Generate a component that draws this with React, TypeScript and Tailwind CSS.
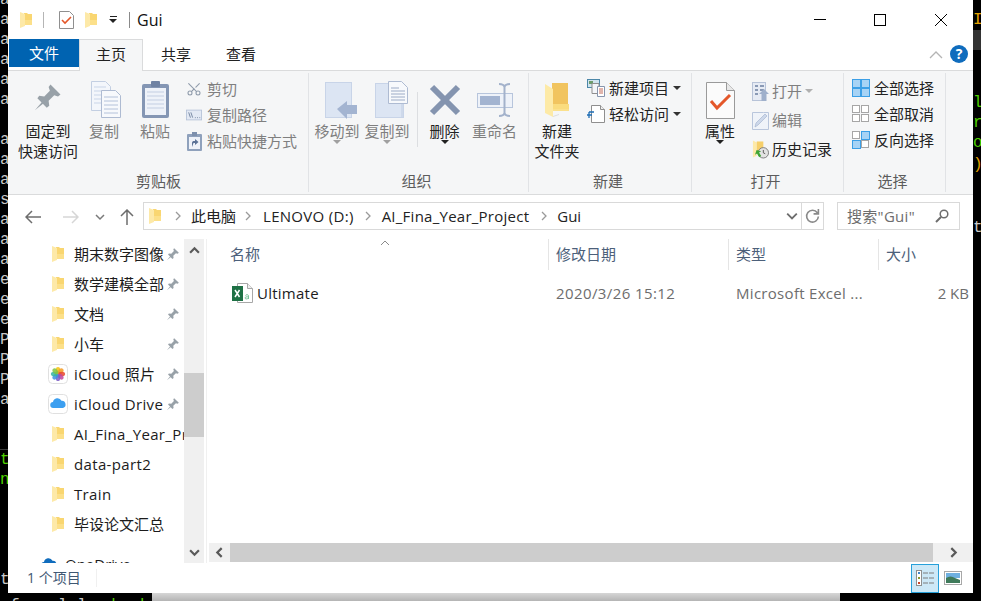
import type { ReactNode } from 'react';
import { Scissors } from 'lucide-react';

const leftRows: [string, string][] = [
  ['a', 'text-[#c8c8c8]'], ['a', 'text-[#c8c8c8]'], ['a', 'text-[#c8c8c8]'], ['a', 'text-[#c8c8c8]'], ['a', 'text-[#c8c8c8]'], ['a', 'text-[#c8c8c8]'],
  ['', ''], ['a', 'text-[#c8c8c8]'], ['a', 'text-[#c8c8c8]'], ['a', 'text-[#c8c8c8]'], ['s', 'text-[#c8c8c8]'], ['a', 'text-[#c8c8c8]'],
  ['a', 'text-[#c8c8c8]'], ['a', 'text-[#c8c8c8]'], ['e', 'text-[#c8c8c8]'], ['e', 'text-[#c8c8c8]'], ['e', 'text-[#c8c8c8]'], ['P', 'text-[#c8c8c8]'],
  ['P', 'text-[#c8c8c8]'], ['P', 'text-[#c8c8c8]'], ['a', 'text-[#c8c8c8]'], ['', ''], ['', 'border-b border-[#3a3a3a]'], ['t', 'text-[#4fd000]'],
  ['n', 'text-[#4fd000]'], ['', ''], ['', ''], ['', ''], ['', ''], ['t', 'text-[#c8c8c8]'],
];

const rightRows: [string, string][] = [
  ['', ''], ['I', 'text-[#e0a000]'], ['', 'bg-[#333333]'], ['', ''], ['', ''], ['l', 'text-[#4fd000] mt-[3px]'],
  ['r', 'text-[#4fd000]'], ['o', 'text-[#4fd000]'], [')', 'text-[#e0a000] mt-[2px]'], ['', ''], ['', ''], ['t', 'text-[#c8c8c8] mt-[3px]'],
];

function Folder({ w = 12, h = 16 }: { w?: number; h?: number }) {
  return (
    <svg width={w} height={h} viewBox="0 0 12 16" className="shrink-0">
      <path d="M4 1h3l1 1h4v11H4z" fill="#f9d671" />
      <path d="M0 0l5 2v12l-5 2z" fill="#fde9a8" />
      <path d="M5 8h7v5H5z" fill="#fce08a" />
    </svg>
  );
}

function BigFolder() {
  return (
    <svg width="26" height="36" viewBox="0 0 26 36">
      <path d="M8 1h16v27H8z" fill="#f1c45f" />
      <path d="M7 22h18v7H7z" fill="#fadc7e" />
      <path d="M1 2l8 5v28l-8-4z" fill="#fdeaa7" />
      <path d="M9 27h16v2H9z" fill="#fbe18d" />
      <path d="M9 34l6-2v1l-6 2z" fill="#ddd" />
    </svg>
  );
}

function Pin({ size = 14 }: { size?: number }) {
  return (
    <svg width={size} height={size} viewBox="0 0 24 24" className="shrink-0">
      <path d="M14 2l8 8-2 1.500-3-1-4.500 4.500.5 4-2 1.500-7.500-7.500 1.500-2 4 .5L13.500 7l-1-3z" fill="#98a1a8" />
      <path d="M8 15l-6.500 7.500L9 16.500z" fill="#98a1a8" />
    </svg>
  );
}

function CopyIcon() {
  return (
    <svg width="30" height="37" viewBox="0 0 30 37" className="ml-[3px] -mt-[2px]">
      <path d="M.5.500h14l5 5v24H.5z" fill="#f3f6fb" stroke="#c3cfe2" />
      <path d="M3 6h12M3 10h14M3 14h14M3 18h14M3 22h14" stroke="#c9d5e8" />
      <path d="M10.500 9.500h14l5 5v22h-19z" fill="#f7f9fc" stroke="#aebbd2" />
      <path d="M13 16h14M13 20h14M13 24h14M13 28h14M13 32h14" stroke="#b4c2da" />
    </svg>
  );
}

function PasteIcon() {
  return (
    <svg width="27" height="37" viewBox="0 0 27 37" className="-mt-[2px]">
      <rect x="0" y="3" width="27" height="34" rx="2" fill="#8496b4" />
      <rect x="3" y="7" width="21" height="27" fill="#eef2f9" />
      <path d="M5 11h17M5 15h17M5 19h17M5 23h17M5 27h17" stroke="#c3cee2" />
      <rect x="9" y="0" width="9" height="6" rx="1" fill="#6f82a3" />
    </svg>
  );
}

function CopyPathIcon() {
  return (
    <svg width="18" height="12" viewBox="0 0 18 12">
      <rect x=".5" y=".5" width="17" height="11" fill="#e3e9f4" stroke="#b7c3d8" />
      <path d="M3 3l2 6M5.500 3l2 6" stroke="#6d7f9c" />
      <path d="M10 9h1M12.500 9h1M15 9h1" stroke="#6d7f9c" />
    </svg>
  );
}

function ShortcutIcon() {
  return (
    <svg width="15" height="19" viewBox="0 0 15 19">
      <rect x="0" y="2" width="15" height="17" rx="1" fill="#8fa1bc" />
      <rect x="2" y="5" width="11" height="12" fill="#eef2f9" />
      <rect x="5" y="0" width="5" height="4" fill="#7d90ad" />
      <path d="M5 15v-4c0-1.500 1-2 2-2h1V7l3.500 3L8 13v-2H7c-.8 0-1 .8-1 1.500z" fill="#5b7297" />
    </svg>
  );
}

function MoveToIcon() {
  return (
    <svg width="33" height="37" viewBox="0 0 33 37" className="ml-[8px]">
      <rect x=".5" y=".5" width="26" height="35" fill="#dce5f3" stroke="#c8d4e8" />
      <path d="M12 27l10-8v4h10v9H22v5z" fill="#a3b4d1" />
    </svg>
  );
}

function CopyToIcon() {
  return (
    <svg width="33" height="38" viewBox="0 0 33 38" className="ml-[8px]">
      <rect x=".5" y="2.500" width="28" height="34" fill="#dce5f3" stroke="#c8d4e8" />
      <path d="M13.500.5h13l6 6v16h-19z" fill="#f7f9fc" stroke="#aebbd2" />
      <path d="M16 7h8M16 10h14M16 13h14M16 16h14M16 19h14" stroke="#9cabc6" />
      <path d="M27 23v13" stroke="#c0cde2" />
    </svg>
  );
}

function DeleteIcon() {
  return (
    <svg width="32" height="32" viewBox="0 0 32 32">
      <path d="M3 3l26 26M29 3L3 29" stroke="#8494af" strokeWidth="6" />
    </svg>
  );
}

function RenameIcon() {
  return (
    <svg width="36" height="34" viewBox="0 0 36 34">
      <rect x=".5" y="10.500" width="35" height="14" fill="#eef2f9" stroke="#b7c5dc" />
      <rect x="3" y="13" width="20" height="9" fill="#a3b4d1" />
      <path d="M22 1c3 0 5 1 5.500 3C28 2 30 1 33 1M27.500 4v26M22 33c3 0 5-1 5.500-3 .5 2 2.500 3 5.500 3" fill="none" stroke="#a3b2cb" strokeWidth="2" />
    </svg>
  );
}

function NewItemIcon() {
  return (
    <svg width="18" height="18" viewBox="0 0 18 18">
      <rect x=".5" y=".5" width="12" height="8" fill="#cfe3ee" stroke="#4c87a8" />
      <rect x="2" y="2" width="4" height="3" fill="#6d9c6c" />
      <path d="M5 4.500h7v10H5z" fill="#f4f6fa" stroke="#8f8f8f" />
      <path d="M10.500 7.500h7v10h-7z" fill="#fff" stroke="#8795ad" />
      <path d="M12 10h4M12 12h4M12 14h4" stroke="#c26a5a" />
    </svg>
  );
}

function EasyAccessIcon() {
  return (
    <svg width="18" height="18" viewBox="0 0 18 18">
      <path d="M4.500.5h9l4 4v13h-13z" fill="#fff" stroke="#8f8f8f" />
      <path d="M13.500.5v4h4" fill="#eee" stroke="#8f8f8f" />
      <path d="M2 7h5M0 10h5M2 7v6" stroke="#1e6db5" strokeWidth="1.300" fill="none" />
    </svg>
  );
}

function PropertiesIcon() {
  return (
    <svg width="29" height="37" viewBox="0 0 29 37">
      <path d="M.5.500h20l8 8v28H.5z" fill="#fbfbfb" stroke="#9a9a9a" />
      <path d="M20.500.5v8h8" fill="#e8e8e8" stroke="#9a9a9a" />
      <path d="M5 19l6 7 13-13" fill="none" stroke="#e4572a" strokeWidth="3" />
    </svg>
  );
}

function OpenIcon() {
  return (
    <svg width="17" height="19" viewBox="0 0 17 19">
      <rect x=".5" y=".5" width="13" height="18" fill="#e6ebf4" stroke="#b7c3d8" />
      <path d="M3 4h3M8 4h4M3 8h3M8 8h4M3 12h3" stroke="#8a9ab5" strokeWidth="2" />
      <path d="M12 7l5 5h-2.500v7h-5v-7H7z" fill="#9fb0cb" />
    </svg>
  );
}

function EditIcon() {
  return (
    <svg width="17" height="18" viewBox="0 0 17 18">
      <path d="M.5.500h11l5 0v17H.5z" fill="#eff3f9" stroke="#b9c6dc" />
      <path d="M3 15l1-4 9-9 2 2-9 9z" fill="#cdd8ea" stroke="#a7b7d1" strokeWidth=".7" />
    </svg>
  );
}

function HistoryIcon() {
  return (
    <svg width="18" height="19" viewBox="0 0 18 19">
      <path d="M1 0l4 2v14l-4 2z" fill="#fde9a8" />
      <path d="M5 1h7v13H5z" fill="#f6cf6a" />
      <circle cx="12" cy="13" r="5.500" fill="#e3e3e3" stroke="#7a7a7a" />
      <path d="M12 10v3l2 1" stroke="#555" fill="none" />
      <path d="M7 10l-4 3.500h2.500V18H8v-4.500h2.500z" fill="#3fa535" transform="rotate(-30 6 14)" />
    </svg>
  );
}

function SelectGrid({ on }: { on: boolean[] }) {
  const cells = [[1, 1], [10, 1], [1, 10], [10, 10]];
  return (
    <svg width="18" height="18" viewBox="0 0 18 18">
      {cells.map(([x, y], i) =>
        on[i] ? (
          <rect key={i} x={x - 0.5} y={y - 0.5} width="8" height="8" fill="#a7d3f5" stroke="#3c9fe6" />
        ) : (
          <rect key={i} x={x - 0.5} y={y - 0.5} width="7" height="7" fill="#fff" stroke="#a6a6a6" />
        )
      )}
    </svg>
  );
}

function ExcelIcon() {
  return (
    <svg width="21" height="20" viewBox="0 0 21 20">
      <path d="M5.500.5h10l5 5v14h-15z" fill="#fff" stroke="#a8a8a8" />
      <path d="M15.500.5v5h5" fill="#eee" stroke="#a8a8a8" />
      <rect x="0" y="3" width="11" height="15" fill="#1e7145" />
      <path d="M3 7l4.500 7M7.500 7L3 14" stroke="#fff" strokeWidth="1.500" />
      <path d="M16.500 16v-3.500c0-1-3-1-3 0M16.500 14c-2-.5-3.500 0-3.500 1s2 1.500 3.500 0" fill="none" stroke="#7cc29b" />
    </svg>
  );
}

function PhotosIcon() {
  const petals = ['#f4c20d', '#f59a23', '#e8452c', '#c2469b', '#7b5bc4', '#3d8fe0', '#32b4a2', '#7fc241'];
  return (
    <svg width="20" height="20" viewBox="0 0 20 20" className="shrink-0">
      <rect x=".5" y=".5" width="19" height="19" rx="4" fill="#fff" stroke="#e0e0e0" />
      {petals.map((c, i) => (
        <ellipse key={i} cx="10" cy="6.300" rx="2.300" ry="3.400" fill={c} opacity=".85" transform={`rotate(${i * 45} 10 10)`} />
      ))}
    </svg>
  );
}

function CloudIcon({ w = 20, h = 20, color = '#3c9ff0', framed = true }: { w?: number; h?: number; color?: string; framed?: boolean }) {
  return (
    <svg width={w} height={h} viewBox="0 0 20 20" className="shrink-0">
      {framed && <rect x=".5" y=".5" width="19" height="19" rx="4" fill="#fff" stroke="#e0e0e0" />}
      <path d="M5.500 14a3 3 0 0 1-.5-6 4.500 4.500 0 0 1 8.500-1.200A3.700 3.700 0 0 1 15 14z" fill={color} />
    </svg>
  );
}

function DetailsViewIcon() {
  return (
    <svg width="18" height="16" viewBox="0 0 18 16">
      <rect x=".5" y=".5" width="5" height="15" fill="#fff" stroke="#8f8f8f" />
      <rect x="2" y="2" width="2" height="2" fill="#3f86c8" />
      <rect x="2" y="7" width="2" height="2" fill="#8b9a2c" />
      <rect x="2" y="12" width="2" height="2" fill="#c8452c" />
      <path d="M7 3h11M7 8h11M7 13h11" stroke="#7d7d7d" strokeDasharray="5 1" />
    </svg>
  );
}

function ThumbViewIcon() {
  return (
    <svg width="18" height="14" viewBox="0 0 18 14">
      <rect x=".5" y=".5" width="17" height="13" fill="#fff" stroke="#a8a8a8" />
      <rect x="2" y="2" width="14" height="5" fill="#6fb0e0" />
      <path d="M2 7c3-2 6-2 9 0l5 2v3H2z" fill="#3f7a5a" />
    </svg>
  );
}

function Chevron({ dir, color = '#5a5a5a', size = 10, stroke = 2 }: { dir: 'up' | 'down' | 'left' | 'right'; color?: string; size?: number; stroke?: number }) {
  const d = { up: 'M1 7l4-4 4 4', down: 'M1 3l4 4 4-4', left: 'M7 1L3 5l4 4', right: 'M3 1l4 4-4 4' }[dir];
  return (
    <svg width={size} height={size} viewBox="0 0 10 10" className="shrink-0">
      <path d={d} fill="none" stroke={color} strokeWidth={stroke} />
    </svg>
  );
}

function Caret({ color = '#333' }: { color?: string }) {
  return (
    <svg width="8" height="5" viewBox="0 0 8 5" className="shrink-0">
      <path d="M0 0h8L4 4z" fill={color} />
    </svg>
  );
}

function BigButton({ icon, lines, width, caret, dim }: { icon: ReactNode; lines: string[]; width: string; caret?: string; dim?: boolean }) {
  return (
    <div className={`${width} shrink-0 flex flex-col items-center pt-[6px]`}>
      <div className="h-[42px] flex items-center justify-center">{icon}</div>
      {lines.map((line) => (
        <div key={line} className={`leading-[20px] whitespace-nowrap ${dim ? 'text-[#7f7f7f]' : 'text-[#222222]'}`}>
          {line}
        </div>
      ))}
      {caret && (
        <div className="mt-[-1px]">
          <Caret color={caret} />
        </div>
      )}
    </div>
  );
}

function SmallButton({ icon, label, dim, iconWidth = 'w-[16px]', gap = 'gap-[5px]', children, rowHeight = 'h-[26px]' }: { icon: ReactNode; label: string; dim?: boolean; iconWidth?: string; gap?: string; children?: ReactNode; rowHeight?: string }) {
  return (
    <div className={`${rowHeight} flex items-center ${gap} whitespace-nowrap ${dim ? 'text-[#7f7f7f]' : 'text-[#222222]'}`}>
      <div className={`${iconWidth} flex justify-center`}>{icon}</div>
      <span>{label}</span>
      {children}
    </div>
  );
}

function Group({ width, label, labelClass = '', children }: { width: string; label: string; labelClass?: string; children: ReactNode }) {
  return (
    <div className={`${width} shrink-0 my-[2px] border-r border-[#e1e3e6] flex flex-col`}>
      <div className="h-[98px] flex">{children}</div>
      <div className={`h-[22px] leading-[22px] text-center text-[#5c5c5c] ${labelClass}`}>{label}</div>
    </div>
  );
}

function Strip({ rows }: { rows: [string, string][] }) {
  return (
    <div className="w-[8px] h-[601px] shrink-0 overflow-hidden bg-black [font-family:'Liberation_Mono',monospace] text-[16px] leading-[20px]">
      <div className="-mt-[10px]">
        {rows.map(([ch, cls], i) => (
          <div key={i} className={`h-[20px] ${cls}`}>
            {ch}
          </div>
        ))}
      </div>
    </div>
  );
}

const navItems: { label: string; icon: ReactNode; pin?: boolean; latin?: boolean }[] = [
  { label: '期末数字图像', icon: <Folder />, pin: true },
  { label: '数学建模全部', icon: <Folder />, pin: true },
  { label: '文档', icon: <Folder />, pin: true },
  { label: '小车', icon: <Folder />, pin: true },
  { label: 'iCloud 照片', icon: <PhotosIcon />, pin: true, latin: true },
  { label: 'iCloud Drive', icon: <CloudIcon />, pin: true, latin: true },
  { label: 'AI_Fina_Year_Project', icon: <Folder />, latin: true },
  { label: 'data-part2', icon: <Folder />, latin: true },
  { label: 'Train', icon: <Folder />, latin: true },
  { label: '毕设论文汇总', icon: <Folder /> },
];

const crumbs = [
  { label: '此电脑', sep: 'ml-[12px]', gap: 'ml-[8px]' },
  { label: 'LENOVO (D:)', sep: 'ml-[7px]', gap: 'ml-[10px] tracking-[0.3px]' },
  { label: 'AI_Fina_Year_Project', sep: 'ml-[9px]', gap: 'ml-[9px] tracking-[0.25px]' },
  { label: 'Gui', sep: 'ml-[10px]', gap: 'ml-[8px]' },
];

export default function App() {
  return (
    <div className="w-[981px] h-[601px] flex overflow-hidden bg-black text-[15px] [font-family:'Open_Sans','Noto_Sans_CJK_SC',sans-serif]">
      <Strip rows={leftRows} />

      <div className="w-[965px] shrink-0 flex flex-col">
        <div className="h-[593px] shrink-0 bg-white flex flex-col">
          {/* Title bar */}
          <div className="h-[39px] shrink-0 flex items-center">
            <div className="ml-[12px]"><Folder /></div>
            <div className="ml-[11px] w-px h-[16px] bg-[#b5b5b5]" />
            <div className="ml-[15px]">
              <svg width="15" height="18" viewBox="0 0 15 18">
                <path d="M.5.500h10l4 4v13H.5z" fill="#fff" stroke="#8f8f8f" />
                <path d="M3 9l3 3 6-6" fill="none" stroke="#e4572a" strokeWidth="1.600" />
              </svg>
            </div>
            <div className="ml-[11px]"><Folder /></div>
            <div className="ml-[12px] flex flex-col items-center gap-[2px]">
              <div className="w-[7px] h-px bg-[#222]" />
              <Caret color="#222" />
            </div>
            <div className="ml-[12px] w-px h-[16px] bg-[#8a8a8a]" />
            <div className="ml-[7px] text-[16px] text-[#111]">Gui</div>
            <div className="ml-auto flex items-center">
              <div className="w-[12px] h-px bg-black" />
              <div className="ml-[48px] w-[12px] h-[12px] border border-black" />
              <svg className="ml-[49px] mr-[26px]" width="12" height="12" viewBox="0 0 12 12">
                <path d="M0 0l12 12M12 0L0 12" stroke="#000" strokeWidth="1" />
              </svg>
            </div>
          </div>

          {/* Tabs */}
          <div className="h-[32px] shrink-0 flex items-start border-b border-[#dadbdc] pl-px">
            <div className="w-[70px] h-[28px] bg-[#0063b1] text-white text-center leading-[28px]">文件</div>
            <div className="w-[64px] h-[32px] bg-[#f5f6f7] border-x border-t border-[#dadbdc] text-center leading-[28px] text-[#222]">主页</div>
            <div className="ml-[18px] leading-[30px] text-[#222]">共享</div>
            <div className="ml-[35px] leading-[30px] text-[#222]">查看</div>
            <div className="ml-auto mr-[5px] mt-[6px] flex items-center gap-[7px]">
              <svg width="14" height="9" viewBox="0 0 14 9">
                <path d="M1 8l6-6 6 6" fill="none" stroke="#b4b4b4" strokeWidth="1.300" />
              </svg>
              <div className="w-[18px] h-[18px] rounded-full bg-[#0f6cbd] text-white text-[14px] font-bold leading-[18px] text-center">?</div>
            </div>
          </div>

          {/* Ribbon */}
          <div className="h-[124px] shrink-0 flex bg-[#f5f6f7] border-b border-[#dadbdc] pl-px">
            <Group width="w-[300px]" label="剪贴板">
              <div className="ml-[9px] flex">
                <BigButton width="w-[60px]" lines={['固定到', '快速访问']} icon={<div className="mt-[-6px]"><Pin size={30} /></div>} />
                <BigButton width="w-[52px]" dim lines={['复制']} icon={<CopyIcon />} />
                <BigButton width="w-[50px]" dim lines={['粘贴']} icon={<PasteIcon />} />
              </div>
              <div className="ml-[6px] pt-[3px]">
                <SmallButton dim label="剪切" icon={<Scissors size={16} strokeWidth={1.6} color="#8f9bab" className="-rotate-90" />} />
                <SmallButton dim label="复制路径" icon={<CopyPathIcon />} />
                <SmallButton dim label="粘贴快捷方式" icon={<ShortcutIcon />} />
              </div>
            </Group>

            <Group width="w-[220px]" label="组织" labelClass="pr-[4px]">
              <div className="ml-[3px] flex">
                <BigButton width="w-[50px]" dim caret="#a0a0a0" lines={['移动到']} icon={<MoveToIcon />} />
                <BigButton width="w-[50px]" dim caret="#a0a0a0" lines={['复制到']} icon={<CopyToIcon />} />
                <div className="ml-[5px] mt-[19px] w-px h-[55px] bg-[#dcdee1]" />
                <BigButton width="w-[53px]" caret="#222" lines={['删除']} icon={<DeleteIcon />} />
                <BigButton width="w-[47px]" dim lines={['重命名']} icon={<RenameIcon />} />
              </div>
            </Group>

            <Group width="w-[163px]" label="新建" labelClass="pr-[4px]">
              <BigButton width="w-[56px]" lines={['新建', '文件夹']} icon={<BigFolder />} />
              <div className="ml-[2px] pt-[2px]">
                <SmallButton label="新建项目" iconWidth="w-[18px]" gap="gap-[4px]" icon={<NewItemIcon />}>
                  <Caret color="#333" />
                </SmallButton>
                <SmallButton label="轻松访问" iconWidth="w-[18px]" gap="gap-[4px]" icon={<EasyAccessIcon />}>
                  <Caret color="#333" />
                </SmallButton>
              </div>
            </Group>

            <Group width="w-[152px]" label="打开" labelClass="pr-[4px]">
              <div className="ml-[3px]">
                <BigButton width="w-[50px]" caret="#222" lines={['属性']} icon={<PropertiesIcon />} />
              </div>
              <div className="ml-[7px] pt-[4px]">
                <SmallButton dim rowHeight="h-[29px]" label="打开" iconWidth="w-[17px]" gap="gap-[3px]" icon={<OpenIcon />}>
                  <Caret color="#b0b0b0" />
                </SmallButton>
                <SmallButton dim rowHeight="h-[29px]" label="编辑" iconWidth="w-[17px]" gap="gap-[3px]" icon={<EditIcon />} />
                <SmallButton rowHeight="h-[29px]" label="历史记录" iconWidth="w-[17px]" gap="gap-[3px]" icon={<HistoryIcon />} />
              </div>
            </Group>

            <Group width="w-[102px]" label="选择" labelClass="pr-[4px]">
              <div className="ml-[8px] pt-[2px]">
                <SmallButton label="全部选择" iconWidth="w-[18px]" gap="gap-[4px]" icon={<SelectGrid on={[true, true, true, true]} />} />
                <SmallButton label="全部取消" iconWidth="w-[18px]" gap="gap-[4px]" icon={<SelectGrid on={[false, false, false, false]} />} />
                <SmallButton label="反向选择" iconWidth="w-[18px]" gap="gap-[4px]" icon={<SelectGrid on={[false, true, true, false]} />} />
              </div>
            </Group>
          </div>

          {/* Address bar */}
          <div className="h-[44px] shrink-0 flex items-start">
            <div className="h-[44px] flex items-center pl-[17px]">
              <svg width="16" height="14" viewBox="0 0 16 14">
                <path d="M7 1L1 7l6 6M1 7h15" fill="none" stroke="#6d6d6d" strokeWidth="1.500" />
              </svg>
              <svg className="ml-[22px]" width="16" height="14" viewBox="0 0 16 14">
                <path d="M9 1l6 6-6 6M15 7H0" fill="none" stroke="#d6d6d6" strokeWidth="1.500" />
              </svg>
              <div className="ml-[16px]"><Chevron dir="down" color="#7a7a7a" size={10} stroke={1.500} /></div>
              <svg className="ml-[15px]" width="14" height="16" viewBox="0 0 14 16">
                <path d="M1 7l6-6 6 6M7 1v15" fill="none" stroke="#6d6d6d" strokeWidth="1.500" />
              </svg>
            </div>
            <div className="ml-[9px] mt-[7px] w-[681px] h-[28px] border border-[#d9d9d9] flex items-center text-[#222] whitespace-nowrap">
              <div className="ml-[5px]"><Folder /></div>
              {crumbs.map((c) => (
                <div key={c.label} className="flex items-center">
                  <div className={c.sep}><Chevron dir="right" color="#9a9a9a" size={10} stroke={1.300} /></div>
                  <span className={c.gap}>{c.label}</span>
                </div>
              ))}
              <div className="ml-auto flex items-center h-full">
                <Chevron dir="down" color="#6d6d6d" size={12} stroke={1.500} />
                <div className="ml-[3px] w-px h-full bg-[#d9d9d9]" />
                <svg className="mx-[3px]" width="15" height="15" viewBox="0 0 14 14">
                  <path d="M11.500 3.500a5.500 5.500 0 1 0 1 3.500M12.500 0v4.500H8" fill="none" stroke="#8a8a8a" strokeWidth="1.500" />
                </svg>
              </div>
            </div>
            <div className="ml-[13px] mt-[7px] w-[123px] h-[28px] border border-[#d9d9d9] flex items-center pl-[9px] text-[#6d6d6d] whitespace-nowrap">
              <span className="tracking-[0.3px]">搜索"Gui"</span>
              <svg className="ml-auto mr-[10px]" width="14" height="14" viewBox="0 0 14 14">
                <circle cx="9" cy="5" r="3.800" fill="none" stroke="#6d6d6d" strokeWidth="1.500" />
                <path d="M6 8l-5 5" stroke="#6d6d6d" strokeWidth="2" />
              </svg>
            </div>
          </div>

          {/* Body */}
          <div className="h-[324px] shrink-0 flex">
            <div className="w-[176px] shrink-0 overflow-hidden text-[#1c1c1c]">
              {navItems.map((item) => (
                <div key={item.label} className="h-[30px] flex items-center relative whitespace-nowrap">
                  <div className="w-[20px] ml-[40px] flex justify-center shrink-0">{item.icon}</div>
                  <span className={item.latin ? 'ml-[6px] tracking-[0.35px]' : 'ml-[6px]'}>{item.label}</span>
                  {item.pin && (
                    <div className="absolute left-[157px] top-[8px] bg-white pl-[1px]"><Pin size={14} /></div>
                  )}
                </div>
              ))}
              <div className="h-[40px] flex items-center whitespace-nowrap mt-[5px]">
                <div className="ml-[31px]"><CloudIcon framed={false} color="#0f6cbd" w={20} h={20} /></div>
                <span className="ml-[6px]">OneDrive</span>
              </div>
            </div>

            <div className="w-[20px] shrink-0 bg-[#f0f0f0] flex flex-col">
              <div className="h-[22px] flex items-center justify-center"><Chevron dir="up" size={11} /></div>
              <div className="mt-[112px] h-[64px] bg-[#cdcdcd]" />
              <div className="mt-auto h-[22px] flex items-center justify-center"><Chevron dir="down" size={11} /></div>
            </div>

            <div className="w-[2px] shrink-0" />
            <div className="w-px shrink-0 bg-[#f0f0f0]" />

            <div className="flex-1 flex flex-col relative pl-[2px]">
              <div className="absolute left-[173px] top-[1px]">
                <svg width="10" height="6" viewBox="0 0 10 6">
                  <path d="M1 5l4-4 4 4" fill="none" stroke="#8a8a8a" />
                </svg>
              </div>
              <div className="h-[31px] flex items-center text-[#4c607a] whitespace-nowrap">
                <div className="w-[340px] h-full flex items-center pl-[21px] border-r border-[#e5e5e5]">名称</div>
                <div className="w-[180px] h-full flex items-center pl-[7px] border-r border-[#e5e5e5]">修改日期</div>
                <div className="w-[150px] h-full flex items-center pl-[7px] border-r border-[#e5e5e5]">类型</div>
                <div className="pl-[7px]">大小</div>
              </div>
              <div className="mt-[8px] h-[30px] flex items-center whitespace-nowrap">
                <div className="w-[339px] flex items-center pl-[23px] gap-[4px] text-[#1c1c1c]">
                  <ExcelIcon />
                  <span className="tracking-[0.25px]">Ultimate</span>
                </div>
                <div className="w-[180px] pl-[8px] text-[#6d6d6d] tracking-[0.4px]">2020/3/26 15:12</div>
                <div className="w-[150px] pl-[8px] text-[#6d6d6d] tracking-[0.3px]">Microsoft Excel ...</div>
                <div className="w-[91px] text-right text-[#6d6d6d]">2 KB</div>
              </div>
              <div className="mt-auto mb-px h-[19px] bg-[#f0f0f0] flex items-center">
                <div className="w-[21px] flex justify-center"><Chevron dir="left" size={11} /></div>
                <div className="w-[703px] h-full bg-[#cdcdcd]" />
                <div className="flex-1 flex justify-center"><Chevron dir="right" size={11} /></div>
              </div>
            </div>
          </div>

          {/* Status bar */}
          <div className="h-[30px] shrink-0 flex items-center text-[#3f5873]">
            <div className="ml-[19px] mb-[2px] w-[69px] text-[14px]">1 个项目</div>
            <div className="w-px h-[18px] bg-[#f0f0f0]" />
            <div className="ml-auto mr-[11px] flex items-center">
              <div className="w-[28px] h-[29px] bg-[#cce8f7] border border-[#26a0da] flex items-center justify-center"><DetailsViewIcon /></div>
              <div className="ml-[5px]"><ThumbViewIcon /></div>
            </div>
          </div>
        </div>

        {/* What shows below the window */}
        <div className="h-[8px] shrink-0 flex">
          <div className="w-[144px] overflow-hidden bg-black [font-family:'Liberation_Mono',monospace] text-[16px] leading-[20px] whitespace-pre pt-[3px] pl-[2px]">
            <span className="text-[#c8c8c8]">f    l l  </span>
            <span className="text-[#4fd000]">d  d</span>
          </div>
          <div className="w-[688px] bg-gradient-to-b from-[#d6d6d6] to-[#b4b4b4]" />
        </div>
      </div>

      <Strip rows={rightRows} />
    </div>
  );
}
